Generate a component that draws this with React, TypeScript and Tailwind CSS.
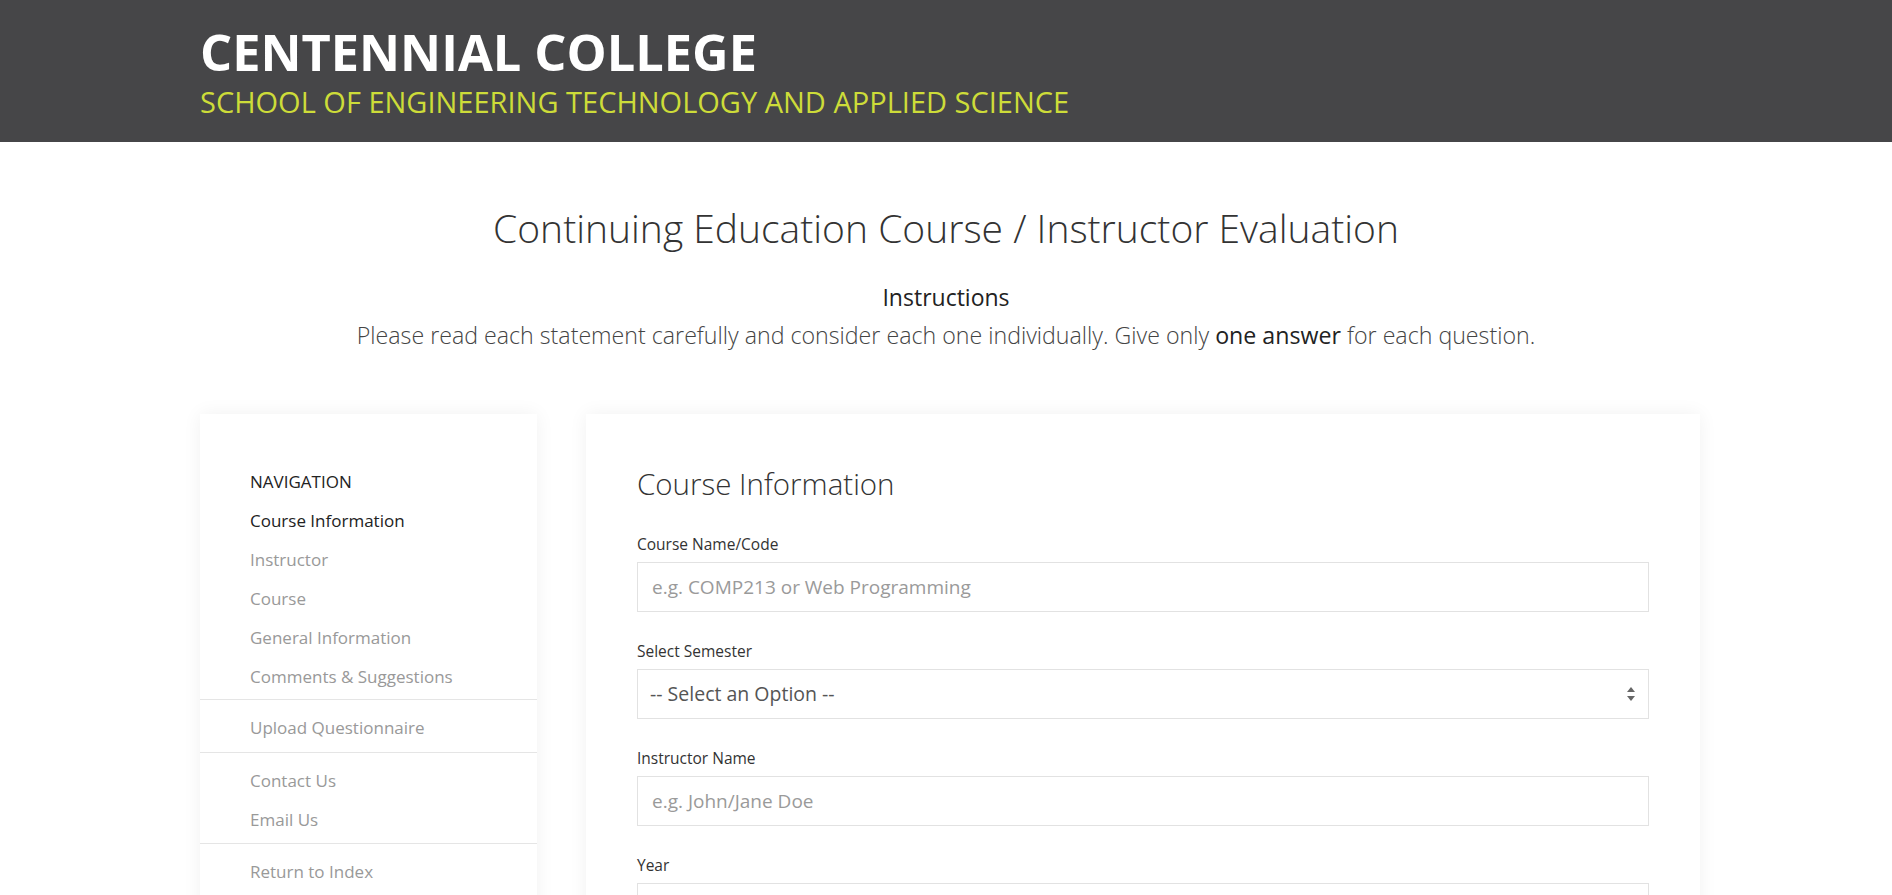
import { ReactNode } from "react";

const font = { fontFamily: '"Open Sans", "Noto Sans", sans-serif' };

function NavGroup({ items, first }: { items: { label: string; active?: boolean; heading?: boolean }[]; first?: boolean }) {
  return (
    <ul className={first ? "px-[50px] pt-[48px] pb-[3px]" : "border-t border-[#e5e5e5] px-[50px] pt-[8px] pb-[4.5px]"}>
      {items.map((item) => (
        <li
          key={item.label}
          className={
            item.heading
              ? "text-[17px] leading-[39px] uppercase text-[#222]"
              : item.active
                ? "text-[17px] leading-[39px] text-[#222]"
                : "text-[17px] leading-[39px] text-[#999]"
          }
        >
          {item.label}
        </li>
      ))}
    </ul>
  );
}

function Field({ label, children }: { label: string; children: ReactNode }) {
  return (
    <div className="mb-[27px]">
      <label className="mb-[6px] block text-[15.5px] leading-[24px] text-[#333]">{label}</label>
      {children}
    </div>
  );
}

function TextInput({ placeholder }: { placeholder: string }) {
  return (
    <input
      placeholder={placeholder}
      className="block h-[50px] w-full border border-[#e2e2e2] px-[14px] text-[19px] text-[#555] outline-none placeholder:text-[#9a9a9a]"
      style={font}
    />
  );
}

function SelectInput() {
  return (
    <div className="relative">
      <select
        className="block h-[50px] w-full appearance-none border border-[#e2e2e2] bg-white px-[12px] text-[19.5px] text-[#555] outline-none"
        style={font}
        defaultValue=""
      >
        <option value="">-- Select an Option --</option>
        <option>Fall</option>
        <option>Winter</option>
        <option>Summer</option>
      </select>
      <svg className="pointer-events-none absolute right-[14px] top-[18px]" width="8" height="14" viewBox="0 0 8 14">
        <path d="M4 0 L8 5 L0 5 Z" fill="#666" />
        <path d="M0 9 L8 9 L4 14 Z" fill="#666" />
      </svg>
    </div>
  );
}

export default function App() {
  return (
    <div className="min-h-screen bg-white" style={font}>
      <header className="h-[142px] bg-[#464648]">
        <div className="ml-[200px] w-[1500px] pt-[24px]">
          <h1 className="text-[50.5px] font-bold leading-[56px] text-white">CENTENNIAL COLLEGE</h1>
          <p className="mt-[4px] text-[29px] leading-[36px] text-[#cddc39]">
            SCHOOL OF ENGINEERING TECHNOLOGY AND APPLIED SCIENCE
          </p>
        </div>
      </header>

      <section className="text-center text-[#333]">
        <h2 className="pt-[61px] text-[39px] font-light leading-[50px]">
          Continuing Education Course / Instructor Evaluation
        </h2>
        <h3 className="mt-[29px] text-[23px] leading-[30px] text-[#222]">Instructions</h3>
        <p className="mt-[8px] text-[23.2px] font-light leading-[30px] text-[#444]">
          Please read each statement carefully and consider each one individually. Give only{" "}
          <span className="font-normal text-[#222]">one answer</span> for each question.
        </p>
      </section>

      <div className="ml-[200px] mt-[64px] flex w-[1500px] items-start gap-[49px]">
        <aside className="h-[600px] w-[337px] shrink-0 bg-white shadow-[0_0_18px_rgba(0,0,0,0.06)]">
          <NavGroup
            first
            items={[
              { label: "Navigation", heading: true },
              { label: "Course Information", active: true },
              { label: "Instructor" },
              { label: "Course" },
              { label: "General Information" },
              { label: "Comments & Suggestions" },
            ]}
          />
          <NavGroup items={[{ label: "Upload Questionnaire" }]} />
          <NavGroup items={[{ label: "Contact Us" }, { label: "Email Us" }]} />
          <NavGroup items={[{ label: "Return to Index" }]} />
        </aside>

        <main className="flex-1 bg-white px-[51px] pt-[53px] pb-[50px] shadow-[0_0_18px_rgba(0,0,0,0.06)]">
          <h2 className="mb-[31px] text-[29.5px] font-light leading-[34px] text-[#333]">Course Information</h2>
          <Field label="Course Name/Code">
            <TextInput placeholder="e.g. COMP213 or Web Programming" />
          </Field>
          <Field label="Select Semester">
            <SelectInput />
          </Field>
          <Field label="Instructor Name">
            <TextInput placeholder="e.g. John/Jane Doe" />
          </Field>
          <Field label="Year">
            <TextInput placeholder="e.g. 2017" />
          </Field>
          <Field label="Campus">
            <TextInput placeholder="e.g. Progress Campus" />
          </Field>
        </main>
      </div>
    </div>
  );
}
